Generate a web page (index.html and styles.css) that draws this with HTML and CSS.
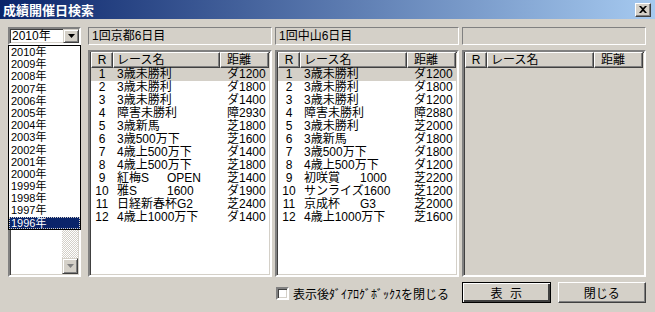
FILE: index.html
```html
<!DOCTYPE html>
<html lang="ja">
<head>
  <meta charset="UTF-8" />
  <title>成績開催日検索</title>
  <link rel="stylesheet" href="styles.css">
</head>
<body>
  <div class="window">
    <div class="titlebar">
      <span class="title">成績開催日検索</span>
      <span class="close-btn">
        <svg width="8" height="7" viewBox="0 0 8 7"><path d="M0 0h2l2 2 2-2h2L5 3.5 8 7H6L4 5 2 7H0l3-3.5z" fill="#000"/></svg>
      </span>
    </div>

    <div class="content">
      <div class="years">
        <div class="combo">
          <span class="combo-text">2010年</span>
          <span class="combo-btn">
            <svg width="7" height="4" viewBox="0 0 7 4"><path d="M0 0h7L3.5 4z" fill="#000"/></svg>
          </span>
        </div>
        <div class="yearbox">
          <div class="yearbox-fill"></div>
          <div class="vscroll">
            <div class="track"></div>
            <div class="scroll-btn">
              <svg width="7" height="4" viewBox="0 0 7 4"><path d="M0 0h7L3.5 4z" fill="#808080"/></svg>
            </div>
          </div>
        </div>
        <ul class="droplist">
          <li>2010年</li>
          <li>2009年</li>
          <li>2008年</li>
          <li>2007年</li>
          <li>2006年</li>
          <li>2005年</li>
          <li>2004年</li>
          <li>2003年</li>
          <li>2002年</li>
          <li>2001年</li>
          <li>2000年</li>
          <li>1999年</li>
          <li>1998年</li>
          <li>1997年</li>
          <li class="picked">1996年</li>
        </ul>
      </div>

      <div class="panel">
        <div class="caption">1回京都6日目</div>
        <div class="listview">
          <div class="lv-head">
            <span class="hd col-r">R</span>
            <span class="hd col-name">レース名</span>
            <span class="hd col-dist">距離</span>
          </div>
          <div class="lv-row sel"><span class="col-r">1</span><span class="col-name">3歳未勝利</span><span class="col-dist">ダ1200</span></div>
          <div class="lv-row"><span class="col-r">2</span><span class="col-name">3歳未勝利</span><span class="col-dist">ダ1800</span></div>
          <div class="lv-row"><span class="col-r">3</span><span class="col-name">3歳未勝利</span><span class="col-dist">ダ1400</span></div>
          <div class="lv-row"><span class="col-r">4</span><span class="col-name">障害未勝利</span><span class="col-dist">障2930</span></div>
          <div class="lv-row"><span class="col-r">5</span><span class="col-name">3歳新馬</span><span class="col-dist">芝1800</span></div>
          <div class="lv-row"><span class="col-r">6</span><span class="col-name">3歳500万下</span><span class="col-dist">芝1600</span></div>
          <div class="lv-row"><span class="col-r">7</span><span class="col-name">4歳上500万下</span><span class="col-dist">ダ1400</span></div>
          <div class="lv-row"><span class="col-r">8</span><span class="col-name">4歳上500万下</span><span class="col-dist">芝1800</span></div>
          <div class="lv-row"><span class="col-r">9</span><span class="col-name"><span class="pad-a">紅梅S</span>OPEN</span><span class="col-dist">芝1400</span></div>
          <div class="lv-row"><span class="col-r">10</span><span class="col-name"><span class="pad-a">雅S</span>1600</span><span class="col-dist">ダ1900</span></div>
          <div class="lv-row"><span class="col-r">11</span><span class="col-name">日経新春杯G2</span><span class="col-dist">芝2400</span></div>
          <div class="lv-row"><span class="col-r">12</span><span class="col-name">4歳上1000万下</span><span class="col-dist">ダ1400</span></div>
        </div>
      </div>

      <div class="panel">
        <div class="caption">1回中山6日目</div>
        <div class="listview">
          <div class="lv-head">
            <span class="hd col-r">R</span>
            <span class="hd col-name">レース名</span>
            <span class="hd col-dist">距離</span>
          </div>
          <div class="lv-row sel"><span class="col-r">1</span><span class="col-name">3歳未勝利</span><span class="col-dist">ダ1200</span></div>
          <div class="lv-row"><span class="col-r">2</span><span class="col-name">3歳未勝利</span><span class="col-dist">ダ1800</span></div>
          <div class="lv-row"><span class="col-r">3</span><span class="col-name">3歳未勝利</span><span class="col-dist">ダ1200</span></div>
          <div class="lv-row"><span class="col-r">4</span><span class="col-name">障害未勝利</span><span class="col-dist">障2880</span></div>
          <div class="lv-row"><span class="col-r">5</span><span class="col-name">3歳未勝利</span><span class="col-dist">芝2000</span></div>
          <div class="lv-row"><span class="col-r">6</span><span class="col-name">3歳新馬</span><span class="col-dist">ダ1800</span></div>
          <div class="lv-row"><span class="col-r">7</span><span class="col-name">3歳500万下</span><span class="col-dist">ダ1800</span></div>
          <div class="lv-row"><span class="col-r">8</span><span class="col-name">4歳上500万下</span><span class="col-dist">ダ1200</span></div>
          <div class="lv-row"><span class="col-r">9</span><span class="col-name"><span class="pad-b">初咲賞</span>1000</span><span class="col-dist">芝2200</span></div>
          <div class="lv-row"><span class="col-r">10</span><span class="col-name">サンライズ1600</span><span class="col-dist">芝1200</span></div>
          <div class="lv-row"><span class="col-r">11</span><span class="col-name"><span class="pad-b">京成杯</span>G3</span><span class="col-dist">芝2000</span></div>
          <div class="lv-row"><span class="col-r">12</span><span class="col-name">4歳上1000万下</span><span class="col-dist">芝1600</span></div>
        </div>
      </div>

      <div class="panel">
        <div class="caption"></div>
        <div class="listview empty">
          <div class="lv-head">
            <span class="hd col-r">R</span>
            <span class="hd col-name">レース名</span>
            <span class="hd col-dist">距離</span>
          </div>
        </div>
      </div>

      <label class="check-row">
        <span class="checkbox"></span>
        <span>表示後ﾀﾞｲｱﾛｸﾞﾎﾞｯｸｽを閉じる</span>
      </label>

      <div class="buttons">
        <button class="btn default">表 示</button>
        <button class="btn">閉じる</button>
      </div>
    </div>
  </div>
</body>
</html>
```

FILE: styles.css
```css
* {
  box-sizing: border-box;
}
body {
  margin: 0;
  font-family: "Liberation Sans", "Noto Sans CJK JP", sans-serif;
  font-size: 12px;
  color: #000;
}
.window {
  width: 655px;
  height: 312px;
  background-color: #d4d0c8;
  overflow: hidden;
}
.titlebar {
  height: 19px;
  display: flex;
  align-items: center;
  justify-content: space-between;
  padding: 0 4px 0 3px;
  background: linear-gradient(to right, #0a246a, #a6caf0);
}
.title {
  color: #fff;
  font-family: "Noto Sans CJK JP", sans-serif;
  font-weight: bold;
  font-size: 13px;
  line-height: 16px;
}
.close-btn {
  width: 16px;
  height: 14px;
  display: flex;
  align-items: center;
  justify-content: center;
  background-color: #d4d0c8;
  border: 1px solid;
  border-color: #fff #404040 #404040 #fff;
  box-shadow: inset -1px -1px #808080;
}

.content {
  display: grid;
  grid-template-columns: 77px 184px 184px 184px;
  grid-template-rows: 250px 21px;
  column-gap: 3px;
  row-gap: 5px;
  padding: 8px 9px 0 8px;
}

/* year selector */
.years {
  position: relative;
  width: 73px;
  display: flex;
  flex-direction: column;
  font-size: 11px;
}
.combo {
  height: 18px;
  margin-bottom: 1px;
  display: flex;
  align-items: center;
  background-color: #fff;
  border: 2px solid;
  border-color: #808080 #fff #fff #808080;
  box-shadow: inset 1px 1px #404040, inset -1px -1px #d4d0c8;
}
.combo-text {
  flex: 1;
  padding-left: 2px;
  line-height: 12px;
  font-size: 12px;
}
.combo-btn {
  width: 16px;
  height: 14px;
  display: flex;
  align-items: center;
  justify-content: center;
  background-color: #d4d0c8;
  border: 1px solid;
  border-color: #d4d0c8 #404040 #404040 #d4d0c8;
  box-shadow: inset 1px 1px #fff, inset -1px -1px #808080;
}
.yearbox {
  flex: 1;
  display: flex;
  background-color: #fff;
  border: 2px solid;
  border-color: #808080 #fff #fff #808080;
  box-shadow: inset 1px 1px #404040, inset -1px -1px #d4d0c8;
  padding: 1px;
}
.yearbox-fill {
  flex: 1;
}
.vscroll {
  width: 16px;
  display: flex;
  flex-direction: column;
}
.track {
  flex: 1;
  background: repeating-conic-gradient(#fff 0 25%, #d4d0c8 0 50%) 0 0 / 2px 2px;
}
.scroll-btn {
  height: 16px;
  display: flex;
  align-items: center;
  justify-content: center;
  background-color: #d4d0c8;
  border: 1px solid;
  border-color: #d4d0c8 #404040 #404040 #d4d0c8;
  box-shadow: inset 1px 1px #fff, inset -1px -1px #808080;
}
.droplist {
  position: absolute;
  top: 18px;
  left: 0;
  width: 73px;
  margin: 0;
  padding: 0;
  list-style: none;
  background-color: #fff;
  border: 1px solid #000;
}
.droplist li {
  height: 12.2px;
  line-height: 12px;
  padding-left: 2px;
}
.droplist li.picked {
  background-color: #0a246a;
  color: #fff;
  outline: 1px dotted #d4d0c8;
  outline-offset: -1px;
}

/* race panels */
.panel {
  display: flex;
  flex-direction: column;
}
.caption {
  height: 18px;
  padding-left: 3px;
  line-height: 16px;
  border: 1px solid;
  border-color: #808080 #fff #fff #808080;
}
.listview {
  margin-top: 5px;
  flex: 1;
  background-color: #fff;
  border: 2px solid;
  border-color: #808080 #fff #fff #808080;
  box-shadow: inset 1px 1px #404040, inset -1px -1px #d4d0c8;
  padding: 0 1px 0 1px;
}
.listview.empty {
  background-color: #d4d0c8;
}
.lv-head {
  display: flex;
  height: 16px;
}
.hd {
  height: 16px;
  line-height: 14px;
  background-color: #d4d0c8;
  border: 1px solid;
  border-color: #fff #404040 #404040 #fff;
  box-shadow: inset -1px -1px #808080;
}
.col-r {
  width: 22px;
  text-align: center;
}
.col-name {
  width: 107px;
  padding-left: 4px;
  white-space: nowrap;
}
.col-dist {
  width: 49px;
  padding-left: 7px;
}
.hd.col-name {
  padding-left: 3px;
}
.hd.col-dist {
  padding-left: 6px;
}
.lv-row {
  display: flex;
  height: 13px;
  line-height: 13px;
}
.lv-row.sel {
  background-color: #d4d0c8;
}
.pad-a {
  display: inline-block;
  width: 50px;
}
.pad-b {
  display: inline-block;
  width: 56px;
}

/* bottom controls */
.check-row {
  grid-column: 3;
  grid-row: 2;
  display: flex;
  align-items: center;
  gap: 4px;
  padding-left: 1px;
  padding-top: 1px;
  white-space: nowrap;
}
.checkbox {
  flex: none;
  width: 13px;
  height: 13px;
  background-color: #fff;
  border: 2px solid;
  border-color: #808080 #fff #fff #808080;
  box-shadow: inset 1px 1px #404040, inset -1px -1px #d4d0c8;
}
.buttons {
  grid-column: 4;
  grid-row: 2;
  display: flex;
  gap: 7px;
}
.btn {
  flex: 1;
  height: 21px;
  padding: 0;
  font-family: "Liberation Sans", "Noto Sans CJK JP", sans-serif;
  font-size: 12px;
  color: #000;
  background-color: #d4d0c8;
  border: 1px solid;
  border-color: #fff #404040 #404040 #fff;
  box-shadow: inset -1px -1px #808080;
}
.btn.default {
  border: 1px solid #000;
  box-shadow: inset 1px 1px #fff, inset -2px -2px #404040, inset -1px -1px #808080;
  word-spacing: 4px;
}
```
